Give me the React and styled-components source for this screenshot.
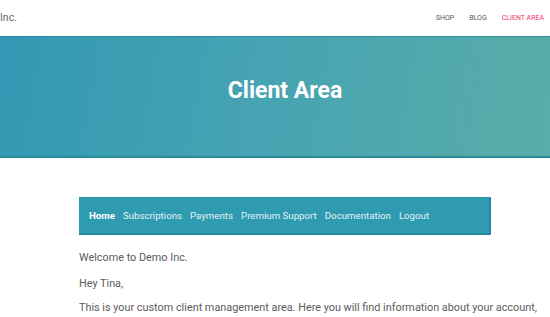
import React from "react";
import styled, { createGlobalStyle } from "styled-components";

const Global = createGlobalStyle`
  html, body { margin: 0; padding: 0; background: #fff; }
  body { font-family: Roboto, "Liberation Sans", sans-serif; overflow: hidden; }
`;

const Page = styled.div`
  width: 550px;
  height: 317px;
  overflow: hidden;
  display: flex;
  flex-direction: column;
`;

const Header = styled.header`
  height: 36px;
  display: flex;
  align-items: center;
  justify-content: space-between;
  padding: 0 6px 0 0;
  flex-shrink: 0;
`;

const Logo = styled.div`
  font-size: 10.5px;
  color: #666;
  margin-top: -2px;
`;

const TopNav = styled.nav`
  display: flex;
  gap: 15px;
  align-items: center;
`;

const TopLink = styled.a`
  font-size: 7px;
  text-transform: uppercase;
  color: ${(p) => (p.$active ? "#f0356b" : "#555")};
  text-decoration: none;
`;

const Hero = styled.section`
  height: 122px;
  flex-shrink: 0;
  background: linear-gradient(100deg, #3298b3 0%, #47a4b2 50%, #5aaca8 100%);
  border-top: 1px solid #2a8a9e;
  border-bottom: 2px solid #2a8d9c;
  box-sizing: border-box;
  display: flex;
  align-items: center;
  justify-content: center;
  padding-left: 20px;
`;

const Title = styled.h1`
  margin: -12px 0 0;
  font-size: 23px;
  font-weight: 700;
  color: #fff;
`;

const Content = styled.main`
  width: 412px;
  margin: 39px 0 0 79px;
`;

const SubNav = styled.nav`
  height: 38px;
  box-sizing: border-box;
  background: #2f9bb1;
  border-right: 2px solid #2486a0;
  border-bottom: 2px solid #2486a0;
  display: flex;
  align-items: center;
  gap: 8px;
  padding: 0 0 0 10px;
`;

const SubLink = styled.a`
  font-size: 9.7px;
  color: ${(p) => (p.$active ? "#fff" : "#e2f1f5")};
  font-weight: ${(p) => (p.$active ? 700 : 400)};
  text-decoration: none;
  margin-top: 1px;
`;

const Para = styled.p`
  margin: ${(p) => p.$mt}px 0 0;
  width: 470px;
  font-size: 10.85px;
  line-height: ${(p) => p.$lh || 16}px;
  color: #5c5c5c;
`;

export default function App() {
  return (
    <Page>
      <Global />
      <Header>
        <Logo>Inc.</Logo>
        <TopNav>
          <TopLink>Shop</TopLink>
          <TopLink>Blog</TopLink>
          <TopLink $active>Client Area</TopLink>
        </TopNav>
      </Header>
      <Hero>
        <Title>Client Area</Title>
      </Hero>
      <Content>
        <SubNav>
          <SubLink $active>Home</SubLink>
          <SubLink>Subscriptions</SubLink>
          <SubLink>Payments</SubLink>
          <SubLink>Premium Support</SubLink>
          <SubLink>Documentation</SubLink>
          <SubLink>Logout</SubLink>
        </SubNav>
        <Para $mt={15}>Welcome to Demo Inc.</Para>
        <Para $mt={10}>Hey Tina,</Para>
        <Para $mt={8} $lh={16}>
          This is your custom client management area. Here you will find information about your account,
          subscriptions, payments and support options. Please use the navigation above to get started.
        </Para>
      </Content>
    </Page>
  );
}
